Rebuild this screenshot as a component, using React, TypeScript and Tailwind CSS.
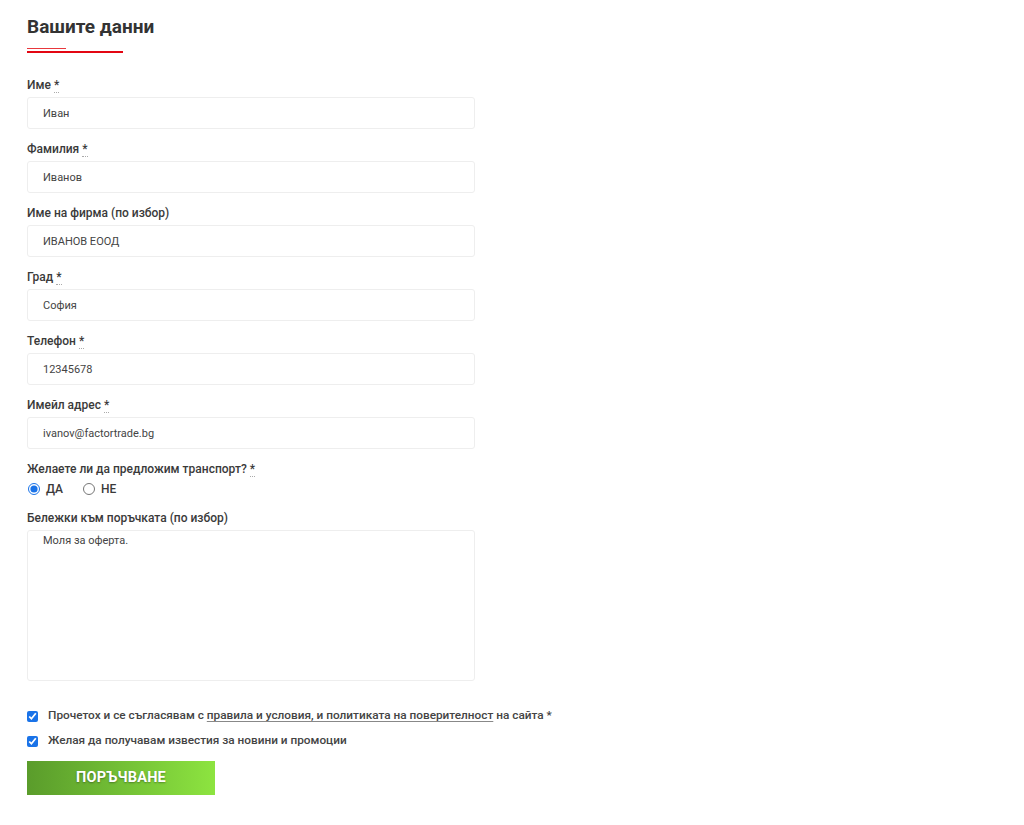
import React from "react";

const Req = () => (
  <>
    {" "}
    <abbr className="no-underline border-b border-dotted border-[#aaa]" title="задължително">*</abbr>
  </>
);

function Field({ label, value, required = true }: { label: string; value: string; required?: boolean }) {
  return (
    <div className="mb-[10px]">
      <label className="block h-[20px] leading-[20px] mb-[2px] text-[12px] font-medium text-[#3a3a3a]">
        {label}
        {required && <Req />}
      </label>
      <input
        readOnly
        value={value}
        className="block w-[448px] h-[32px] px-[15px] text-[11px] text-[#444] bg-white border border-[#eeeeee] rounded-[3px] outline-none"
      />
    </div>
  );
}

export default function App() {
  return (
    <div className="min-h-[825px] bg-white pl-[27px] pt-[15px]" style={{ fontFamily: "Roboto, 'Noto Sans', sans-serif" }}>
      <h2 className="text-[19px] font-bold leading-[24px] text-[#333] h-[24px]">Вашите данни</h2>
      <div className="relative mt-[9px] h-[6px] w-[96px]">
        <div className="absolute left-0 top-0 h-[1px] w-[39px] bg-[#e8383d]" />
        <div className="absolute left-0 top-[3px] h-[2px] w-[96px] bg-[#e30613]" />
      </div>
      <div className="mt-[21px]">
        <Field label="Име" value="Иван" />
        <Field label="Фамилия" value="Иванов" />
        <Field label="Име на фирма (по избор)" value="ИВАНОВ ЕООД" required={false} />
        <Field label="Град" value="София" />
        <Field label="Телефон" value="12345678" />
        <Field label="Имейл адрес" value="ivanov@factortrade.bg" />
        <div className="h-[20px] leading-[20px] text-[12px] font-medium text-[#3a3a3a]">
          Желаете ли да предложим транспорт?
          <Req />
        </div>
        <div className="flex items-center h-[20px] text-[12px] font-medium text-[#3a3a3a]">
          <label className="flex items-center">
            <input type="radio" name="t" defaultChecked className="m-0 w-[12px] h-[12px] accent-[#1a73e8] ml-[1px]" />
            <span className="ml-[6px]">ДА</span>
          </label>
          <label className="flex items-center ml-[20px]">
            <input type="radio" name="t" className="m-0 w-[12px] h-[12px]" />
            <span className="ml-[6px]">НЕ</span>
          </label>
        </div>
        <label className="block mt-[9px] h-[20px] leading-[20px] mb-[2px] text-[12px] font-medium text-[#3a3a3a]">
          Бележки към поръчката (по избор)
        </label>
        <textarea
          readOnly
          value="Моля за оферта."
          className="block w-[448px] h-[151px] px-[15px] pt-[2px] text-[11px] text-[#444] bg-white border border-[#eeeeee] rounded-[3px] outline-none resize-none"
        />
        <label className="flex items-center mt-[25px] h-[20px] text-[11.8px] font-medium text-[#444]">
          <input type="checkbox" defaultChecked className="m-0 w-[11px] h-[11px] accent-[#1a73e8]" />
          <span className="ml-[10px]">
            Прочетох и се съгласявам с{" "}
            <span className="underline underline-offset-2 decoration-[#888]">правила и условия, и политиката на поверителност</span>{" "}
            на сайта *
          </span>
        </label>
        <label className="flex items-center mt-[5px] h-[20px] text-[11.8px] font-medium text-[#444]">
          <input type="checkbox" defaultChecked className="m-0 w-[11px] h-[11px] accent-[#1a73e8]" />
          <span className="ml-[10px]">Желая да получавам известия за новини и промоции</span>
        </label>
        <button
          className="mt-[10px] w-[188px] h-[34px] text-white font-bold text-[14.5px] tracking-[0.2px] bg-gradient-to-r from-[#5a9c2b] to-[#8de440]"
          style={{ textShadow: "0 1px 2px rgba(0,0,0,0.35)" }}
        >
          ПОРЪЧВАНЕ
        </button>
      </div>
    </div>
  );
}
